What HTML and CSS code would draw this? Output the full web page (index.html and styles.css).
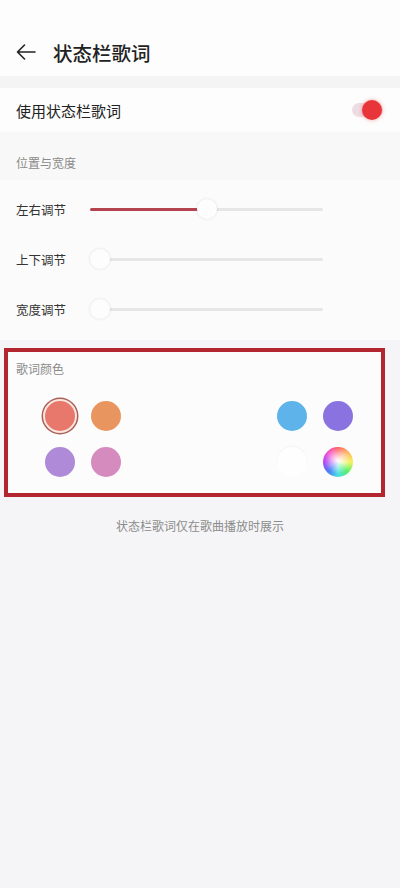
FILE: index.html
```html
<!DOCTYPE html>
<html lang="zh">
<head>
<meta charset="utf-8">
<link rel="stylesheet" href="styles.css">
</head>
<body>
<header class="topbar">
  <svg class="back" width="20" height="16" viewBox="0 0 20 16"><path d="M19 8H1.5M8.5 1L1.5 8l7 7" fill="none" stroke="#222" stroke-width="1.6" stroke-linecap="round" stroke-linejoin="round"/></svg>
  <h1 class="title">状态栏歌词</h1>
</header>
<div class="band"></div>
<div class="row-toggle">
  <span class="row-text">使用状态栏歌词</span>
  <span class="switch"><span class="switch-track"></span><span class="switch-knob"></span></span>
</div>
<div class="section-label">位置与宽度</div>
<div class="slider-card">
  <div class="slider-row">
    <span class="slider-label">左右调节</span>
    <div class="track"><div class="fill" style="width:108px"></div><div class="thumb" style="left:107px"></div></div>
  </div>
  <div class="slider-row">
    <span class="slider-label">上下调节</span>
    <div class="track"><div class="thumb" style="left:0px"></div></div>
  </div>
  <div class="slider-row">
    <span class="slider-label">宽度调节</span>
    <div class="track"><div class="thumb" style="left:0px"></div></div>
  </div>
</div>
<div class="color-card">
  <div class="color-label">歌词颜色</div>
  <div class="swatches">
    <span class="dot selected c-red"></span>
    <span class="dot c-orange"></span>
    <span class="dot c-white"></span>
    <span class="dot c-white"></span>
    <span class="dot c-white"></span>
    <span class="dot c-blue"></span>
    <span class="dot c-violet"></span>
    <span class="dot c-purple"></span>
    <span class="dot c-pink"></span>
    <span class="dot c-white"></span>
    <span class="dot c-white"></span>
    <span class="dot c-white"></span>
    <span class="dot c-white faint"></span>
    <span class="dot c-wheel"></span>
  </div>
</div>
<p class="footnote">状态栏歌词仅在歌曲播放时展示</p>
</body>
</html>
```
FILE: styles.css
```css
* { box-sizing: border-box; }
body {
  margin: 0;
  background: #f5f5f7;
  font-family: "Noto Sans CJK SC", "Noto Sans", sans-serif;
  color: #222;
}
.topbar {
  background: #fdfdfd;
  height: 76px;
  padding: 28px 0 0 16px;
  display: flex;
  align-items: center;
}
.back { margin-right: 17px; flex: none; }
.title {
  margin: 0;
  font-size: 19.5px;
  font-weight: 500;
  line-height: 25px;
  color: #222;
}
.band { height: 12px; background: #f4f4f5; }
.row-toggle {
  background: #fdfdfd;
  height: 44px;
  padding: 0 16px;
  display: flex;
  align-items: center;
  justify-content: space-between;
}
.row-text { font-size: 15px; color: #222; }
.switch { position: relative; width: 34px; height: 22px; }
.switch-track {
  position: absolute; left: 2px; top: 4px;
  width: 31px; height: 14px; border-radius: 7px;
  background: #eddde2;
}
.switch-knob {
  position: absolute; left: 11.5px; top: 1px;
  width: 20px; height: 20px; border-radius: 50%;
  background: #e8353a;
  box-shadow: 0 0 4px rgba(232, 53, 58, 0.45);
}
.section-label {
  padding: 24px 16px 10px;
  font-size: 12px;
  line-height: 14px;
  color: #8a8a8a;
  background: #f8f8f8;
}
.slider-card {
  background: #fbfbfb;
  padding: 4px 0 6px;
}
.slider-row {
  height: 50px;
  display: flex;
  align-items: center;
  padding-left: 16px;
}
.slider-label { width: 74px; font-size: 12.5px; color: #333; }
.track {
  position: relative;
  width: 233px;
  height: 3px;
  border-radius: 2px;
  background: #e6e6e6;
}
.fill {
  height: 3px;
  border-radius: 2px;
  background: #b3444f;
}
.thumb {
  position: absolute;
  top: -8.5px;
  width: 20px; height: 20px;
  border-radius: 50%;
  background: #fdfdfd;
  box-shadow: 0 0 3px rgba(0, 0, 0, 0.12);
}
.color-card {
  margin: 8px 0 0 4px;
  width: 381px;
  border: 4px solid #b3262f;
  background: #fcfcfc;
  padding: 10px 0 16px;
}
.color-label {
  padding-left: 8px;
  font-size: 12px;
  line-height: 14px;
  color: #8a8a8a;
}
.swatches {
  margin: 25px 0 0 37px;
  width: 308px;
  display: grid;
  grid-template-columns: repeat(7, 30px);
  justify-content: space-between;
  row-gap: 16px;
}
.dot { width: 30px; height: 30px; border-radius: 50%; display: block; }
.c-red { background: #e8776c; }
.selected { box-shadow: 0 0 0 2px #fbe6df, 0 0 0 3.5px #a9625a; }
.c-orange { background: #e8955f; }
.c-white { background: #fcfcfc; }
.faint { background: #fefefe; box-shadow: 0 -1px 2px rgba(0, 0, 0, 0.04); }
.c-blue { background: #5db3ea; }
.c-violet { background: #8a73e0; }
.c-purple { background: #ae8ad9; }
.c-pink { background: #d68bbf; }
.c-wheel {
  background: radial-gradient(circle at 50% 45%, #ffffff 0%, rgba(255,255,255,0.6) 25%, rgba(255,255,255,0) 60%),
    conic-gradient(from 0deg, #ff5a5a, #ffb35a, #f4f25a, #5af06a, #4ae0e0, #4a7ef5, #b24af5, #f54ad0, #ff5a5a);
}
.footnote {
  margin: 20px 0 0;
  text-align: center;
  font-size: 12px;
  color: #8c8c8c;
}
```
